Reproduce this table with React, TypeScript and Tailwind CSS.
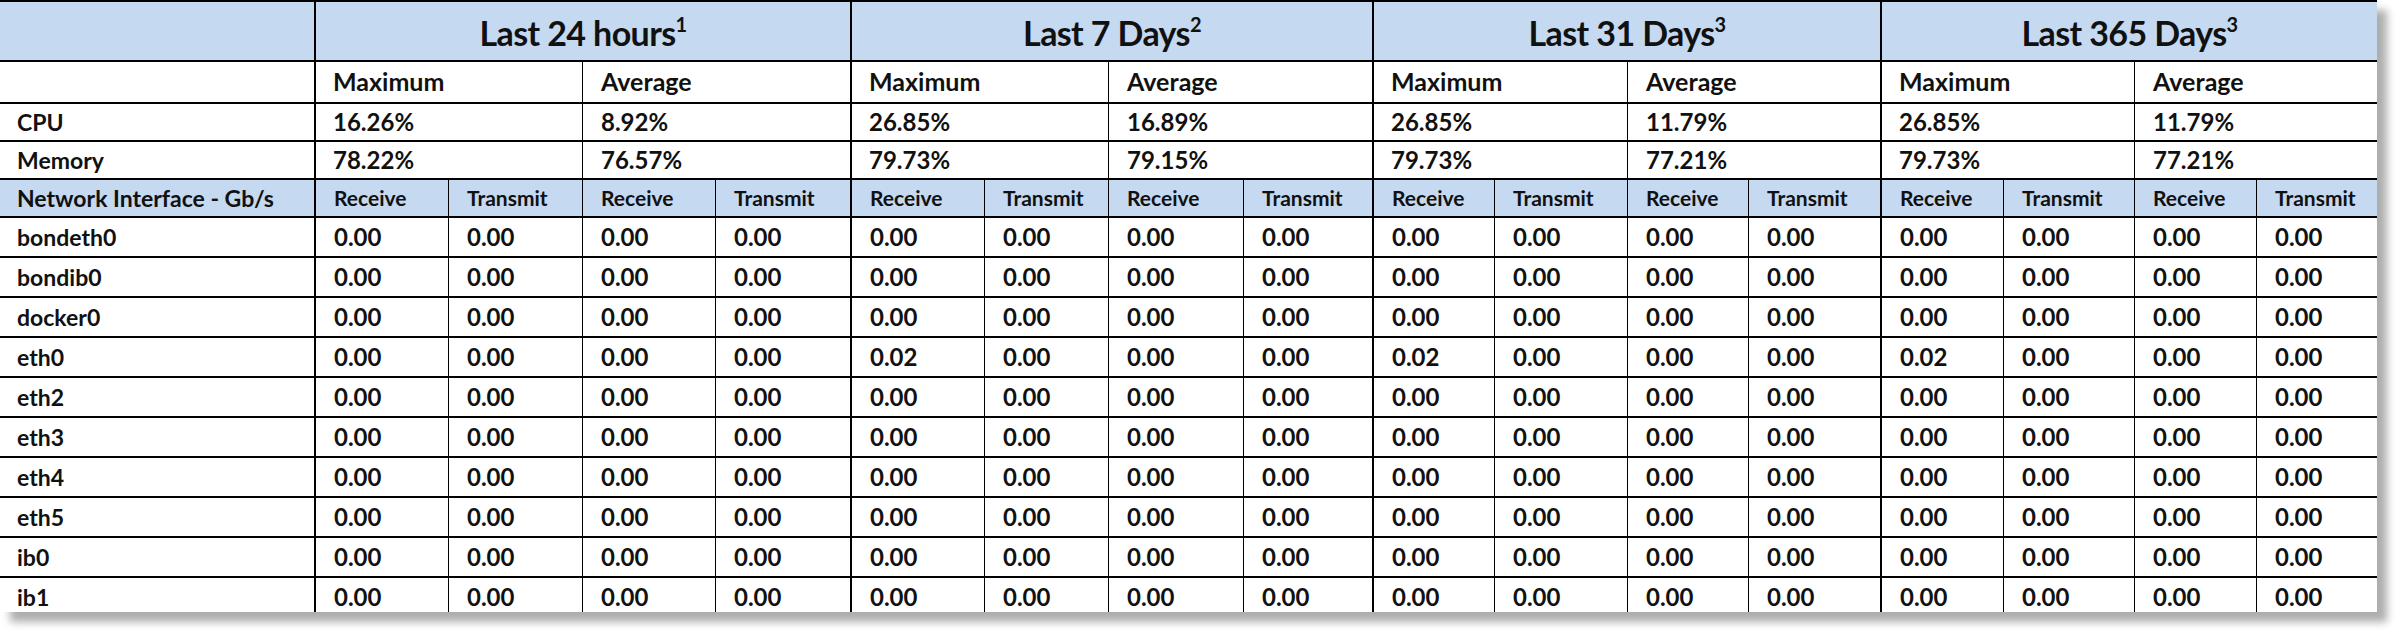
import React from "react";

const groups = [
  { title: "Last 24 hours", sup: "1", cpu: ["16.26%", "8.92%"], mem: ["78.22%", "76.57%"] },
  { title: "Last 7 Days", sup: "2", cpu: ["26.85%", "16.89%"], mem: ["79.73%", "79.15%"] },
  { title: "Last 31 Days", sup: "3", cpu: ["26.85%", "11.79%"], mem: ["79.73%", "77.21%"] },
  { title: "Last 365 Days", sup: "3", cpu: ["26.85%", "11.79%"], mem: ["79.73%", "77.21%"] },
];

const ifaces = ["bondeth0", "bondib0", "docker0", "eth0", "eth2", "eth3", "eth4", "eth5", "ib0", "ib1"];

function values(name: string): string[] {
  const v: string[] = [];
  for (let g = 0; g < 4; g++) {
    for (let k = 0; k < 4; k++) {
      v.push(name === "eth0" && g > 0 && k === 0 ? "0.02" : "0.00");
    }
  }
  return v;
}

function Cell({
  children,
  blue,
  left,
  span,
  className,
}: {
  children?: React.ReactNode;
  blue?: boolean;
  left?: "thick" | "thin" | "none";
  span?: 1 | 2 | 4;
  className?: string;
}) {
  const l = left === "thick" ? "border-l-2" : left === "thin" ? "border-l" : "";
  const s = span === 4 ? "col-span-4" : span === 2 ? "col-span-2" : "";
  return (
    <div
      className={`${l} ${s} border-b-2 border-black flex items-center overflow-hidden whitespace-nowrap ${
        blue ? "bg-[#c5d9f1]" : "bg-white"
      } ${className ?? ""}`}
    >
      {children}
    </div>
  );
}

export default function App() {
  return (
    <div className="w-[2407px] h-[643px] bg-white font-[Lato,sans-serif] text-[#111]">
      <div className="w-[2377px] h-[612px] overflow-hidden shadow-[10px_10px_8px_rgba(0,0,0,0.32)]">
        <div className="border-t-2 border-black grid grid-cols-[314px_134px_134px_133px_135px_134px_124px_135px_129px_122px_133px_121px_132px_123px_131px_122px_121px] grid-rows-[60px_42px_38px_38px_38px_40px_40px_40px_40px_40px_40px_40px_40px_40px_40px]">
          {/* Row 1 */}
          <Cell blue />
          {groups.map((g) => (
            <Cell key={g.title} blue left="thick" span={4} className="justify-center pt-[4px]">
              <span className="text-[34px] font-bold leading-none tracking-[-0.6px]">
                {g.title}
                <sup className="text-[20px] font-bold -top-[14px]">{g.sup}</sup>
              </span>
            </Cell>
          ))}
          {/* Row 2 */}
          <Cell />
          {groups.map((g) => (
            <React.Fragment key={g.title + "h"}>
              <Cell left="thick" span={2} className="pl-[17px] text-[25px] font-bold">
                Maximum
              </Cell>
              <Cell left="thin" span={2} className="pl-[18px] text-[25px] font-bold">
                Average
              </Cell>
            </React.Fragment>
          ))}
          {/* CPU */}
          <Cell className="pl-[17px] text-[23px] font-bold">CPU</Cell>
          {groups.map((g) => (
            <React.Fragment key={g.title + "c"}>
              <Cell left="thick" span={2} className="pl-[17px] text-[24px] font-bold">
                {g.cpu[0]}
              </Cell>
              <Cell left="thin" span={2} className="pl-[18px] text-[24px] font-bold">
                {g.cpu[1]}
              </Cell>
            </React.Fragment>
          ))}
          {/* Memory */}
          <Cell className="pl-[17px] text-[23px] font-bold">Memory</Cell>
          {groups.map((g) => (
            <React.Fragment key={g.title + "m"}>
              <Cell left="thick" span={2} className="pl-[17px] text-[24px] font-bold">
                {g.mem[0]}
              </Cell>
              <Cell left="thin" span={2} className="pl-[18px] text-[24px] font-bold">
                {g.mem[1]}
              </Cell>
            </React.Fragment>
          ))}
          {/* Network header */}
          <Cell blue className="pl-[17px] text-[23px] font-bold">
            Network Interface - Gb/s
          </Cell>
          {Array.from({ length: 16 }).map((_, i) => (
            <Cell
              key={"nh" + i}
              blue
              left={i % 4 === 0 ? "thick" : "thin"}
              className="pl-[18px] text-[21px] font-bold"
            >
              {i % 2 === 0 ? "Receive" : "Transmit"}
            </Cell>
          ))}
          {/* Data rows */}
          {ifaces.map((name) => (
            <React.Fragment key={name}>
              <Cell className="pl-[17px] text-[23px] font-bold">{name}</Cell>
              {values(name).map((v, i) => (
                <Cell
                  key={name + i}
                  left={i % 4 === 0 ? "thick" : "thin"}
                  className="pl-[18px] text-[24px] font-bold"
                >
                  {v}
                </Cell>
              ))}
            </React.Fragment>
          ))}
        </div>
      </div>
    </div>
  );
}
